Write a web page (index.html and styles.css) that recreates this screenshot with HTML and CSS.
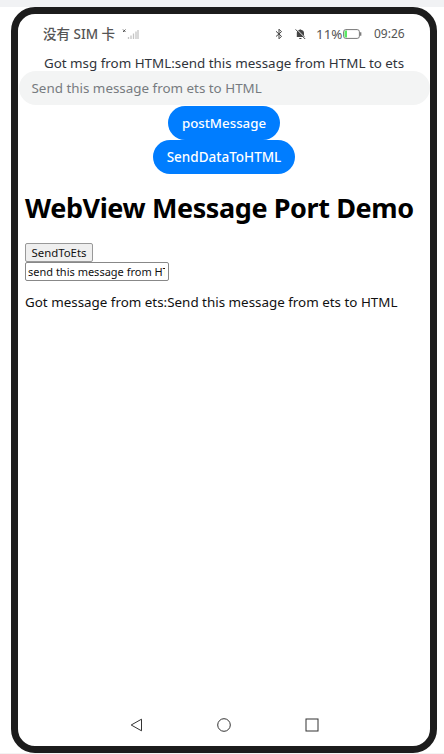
FILE: index.html
```
<!DOCTYPE html>
<html lang="en">
<head>
<meta charset="utf-8">
<title>WebView Message Port Demo</title>
<link rel="stylesheet" href="styles.css">
</head>
<body>
<main class="phone">
  <header class="status">
    <span class="carrier">没有 SIM 卡</span>
    <svg class="signal" width="18" height="12" viewBox="0 0 18 12"><path d="M1 1.500l2.500 2.500M3.500 1.500L1 4" stroke="#444" stroke-width=".9"/><path d="M6.500 9v2M9 7.500v3.500M11.500 5.500v5.500M14 3.500v7.500M16 2v9" stroke="#c4c4c4" stroke-width="1.300"/></svg>
    <svg class="bluetooth" width="8" height="12" viewBox="0 0 8 12"><path d="M1 3.300l5.500 5L4 10.800V1.200l2.500 2.500L1 8.500" fill="none" stroke="#444" stroke-width="1"/></svg>
    <svg class="bell" width="11" height="12" viewBox="0 0 11 12"><path d="M1.800 8.900V5C1.800 3 3.200 2 4.600 1.700Q5.300.6 6 1.700C7.800 2 9 3.300 9 5v2.600l1 1.500H1zM4 9.900h2.700q-.3 1.200-1.300 1.200T4 9.900" fill="#444"/><path d="M1.200.900l9.400 9.400" stroke="#fff" stroke-width="1"/><path d="M.6 1.400l9.600 9.600" stroke="#444" stroke-width="1"/></svg>
    <span class="percent">11%</span>
    <svg class="battery" width="19" height="10" viewBox="0 0 19 10"><rect x=".6" y=".6" width="15.800" height="8.800" rx="2.200" fill="#fff" stroke="#777" stroke-width="1"/><path d="M1.500 2.500q0-1 1-1H4v7H2.500q-1 0-1-1z" fill="#58e865"/><path d="M17.700 3.300v3.400" stroke="#777" stroke-width="1.300"/></svg>
    <time class="clock">09:26</time>
  </header>
  <p class="received"><span>Got msg from HTML:send this message from HTML to ets</span></p>
  <div class="field"><span>Send this message from ets to HTML</span></div>
  <button class="pill post"><span>postMessage</span></button>
  <button class="pill send"><span>SendDataToHTML</span></button>
  <section class="web">
    <h1><span>WebView Message Port Demo</span></h1>
    <button class="native"><span>SendToEts</span></button>
    <div class="entry"><span>send this message from HTML to ets</span></div>
    <p class="output"><span>Got message from ets:Send this message from ets to HTML</span></p>
  </section>
  <nav class="nav">
    <svg width="14" height="14" viewBox="0 0 14 14"><path d="M1.200 7L11.500 1.200v11.600z"/></svg>
    <svg width="14" height="14" viewBox="0 0 14 14"><circle cx="7" cy="7" r="6.300"/></svg>
    <svg width="14" height="14" viewBox="0 0 14 14"><rect x="1" y="1" width="12" height="12"/></svg>
  </nav>
</main>
</body>
</html>
```
FILE: styles.css
```
* { box-sizing: border-box; }
body {
  margin: 0;
  height: 754px;
  padding: 7px 7px 1px 11px;
  background: linear-gradient(#f1f2f4 7px, #fff 7px, #fff 753px, #f3f3f3 753px);
  font-family: "Noto Sans", "Noto Sans CJK SC", sans-serif;
  overflow: hidden;
}
p, h1 { margin: 0; white-space: nowrap; }
button { border: 0; padding: 0; font-family: inherit; white-space: nowrap; }
.phone {
  width: 426px;
  height: 746px;
  border: 7px solid #1c1c1c;
  border-radius: 24px;
  background: #fff;
  display: flex;
  flex-direction: column;
  align-items: center;
}
.status {
  width: 100%;
  height: 40px;
  padding-left: 25px;
  display: flex;
  align-items: center;
  color: #555;
  font-size: 13px;
  line-height: 18px;
  white-space: nowrap;
}
.carrier { width: 79px; font-size: 13.5px; font-weight: 500; }
.signal { width: 18px; }
.bluetooth { margin-left: 135px; }
.bell { margin-left: 12px; }
.percent { margin-left: 10px; width: 27px; font-size: 13.4px; }
.clock { margin-left: 12px; font-size: 12px; }
.received { height: 17px; line-height: 19px; font-size: 13.4px; color: #30343b; }
.field {
  width: 411px;
  height: 34px;
  border-radius: 17px;
  background: #f3f4f4;
  padding-left: 13px;
  line-height: 34px;
  font-size: 13.4px;
  color: #777b80;
}
.pill {
  height: 34px;
  border-radius: 17px;
  background: #007dff;
  color: #fff;
  font-size: 13.3px;
  font-weight: 500;
}
.post { width: 112px; margin-top: 0.5px; }
.send { width: 142px; margin-top: 0.5px; font-size: 13.5px; }
.web { width: 100%; padding: 16px 7px 0; flex: 1; }
h1 { font-size: 27px; line-height: 36px; font-weight: 700; letter-spacing: -0.4px; color: #000; }
.native {
  display: block;
  width: 68px;
  height: 19px;
  margin-top: 17px;
  border: 1px solid #999;
  border-radius: 2px;
  background: #efefef;
  color: #111;
  font-size: 11.4px;
  line-height: 17px;
}
.entry {
  width: 144px;
  height: 19px;
  border: 1px solid #888;
  border-radius: 2px;
  padding: 0 3px 0 2px;
  font-size: 11px;
  line-height: 17px;
  color: #111;
}
.entry span { display: block; overflow: hidden; white-space: nowrap; }
.output { margin-top: 11px; line-height: 20px; font-size: 13.4px; color: #111; }
.nav {
  width: 189px;
  height: 28px;
  display: flex;
  justify-content: space-between;
}
.nav svg { fill: none; stroke: #333; stroke-width: 1; }
```
